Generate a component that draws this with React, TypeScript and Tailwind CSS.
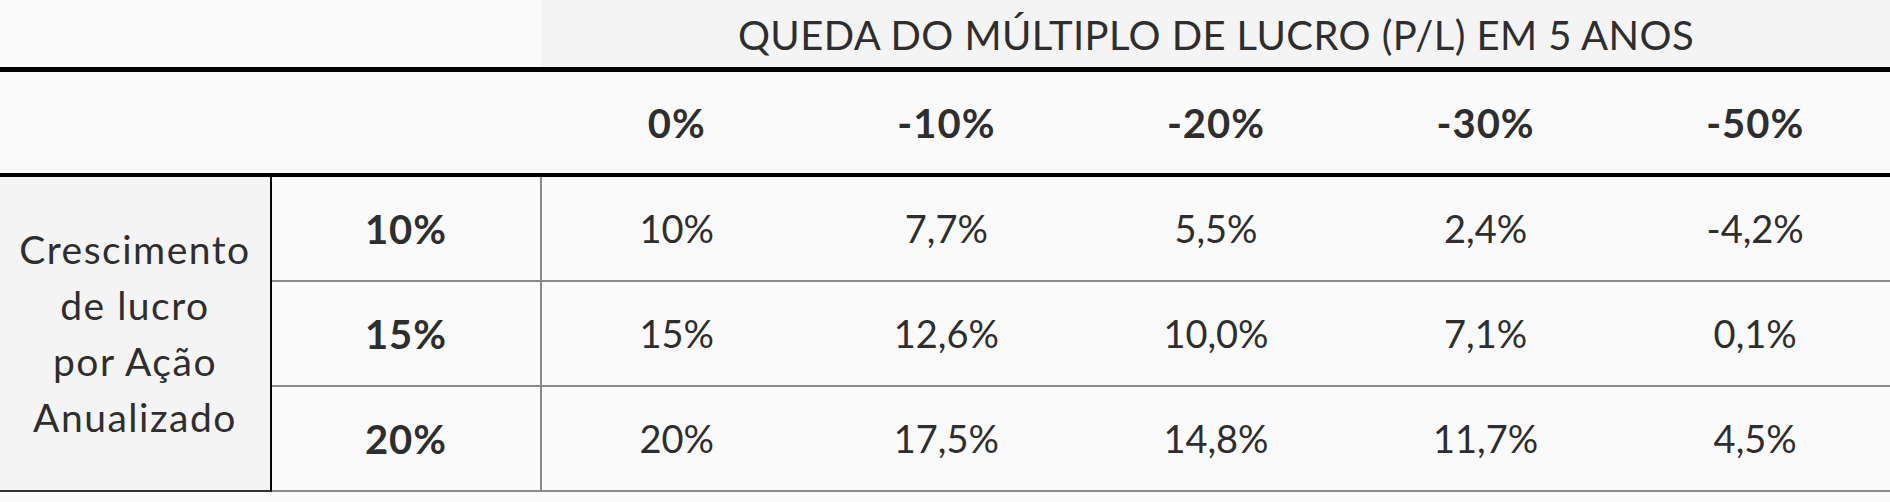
const COLS = ['0%', '-10%', '-20%', '-30%', '-50%']

const ROWS = [
  { growth: '10%', values: ['10%', '7,7%', '5,5%', '2,4%', '-4,2%'] },
  { growth: '15%', values: ['15%', '12,6%', '10,0%', '7,1%', '0,1%'] },
  { growth: '20%', values: ['20%', '17,5%', '14,8%', '11,7%', '4,5%'] },
]

export default function App() {
  return (
    <main className="w-[1890px] h-[502px] bg-[#fafafa] text-[#2e2e2e] font-['Lato','Open_Sans',sans-serif]">
      {/* title band */}
      <div className="flex h-[72px] border-b-[5px] border-black">
        <div className="w-[542px]" />
        <div className="flex-1 bg-[#f4f4f4] flex items-center justify-center pt-[3px] text-[40px] leading-none tracking-[0.4px]">
          QUEDA DO MÚLTIPLO DE LUCRO (P/L) EM 5 ANOS
        </div>
      </div>

      {/* column headers */}
      <div className="grid grid-cols-[272px_270px_repeat(5,1fr)] h-[105px] border-b-[4px] border-black">
        <div />
        <div />
        {COLS.map((c) => (
          <div key={c} className="flex items-center justify-center text-[40px] font-bold tracking-[1px]">
            {c}
          </div>
        ))}
      </div>

      {/* body */}
      <div className="grid grid-cols-[272px_270px_repeat(5,1fr)] grid-rows-3 h-[315px]">
        <div className="row-span-3 bg-[#f4f4f4] border-r-2 border-r-black border-b-2 border-b-[#333] flex items-center justify-center text-center text-[39px] leading-[56px] tracking-[1.5px] pb-[2px]">
          Crescimento
          <br />
          de lucro
          <br />
          por Ação
          <br />
          Anualizado
        </div>
        {ROWS.map((r) => (
          <div key={r.growth} className="contents">
            <div className="flex items-center justify-center border-r-2 border-b-2 border-[#8a8a8a] text-[40px] font-bold tracking-[1px]">
              {r.growth}
            </div>
            {r.values.map((v, i) => (
              <div
                key={i}
                className="flex items-center justify-center border-b-2 border-[#8a8a8a] text-[38px]"
              >
                {v}
              </div>
            ))}
          </div>
        ))}
      </div>
    </main>
  )
}
